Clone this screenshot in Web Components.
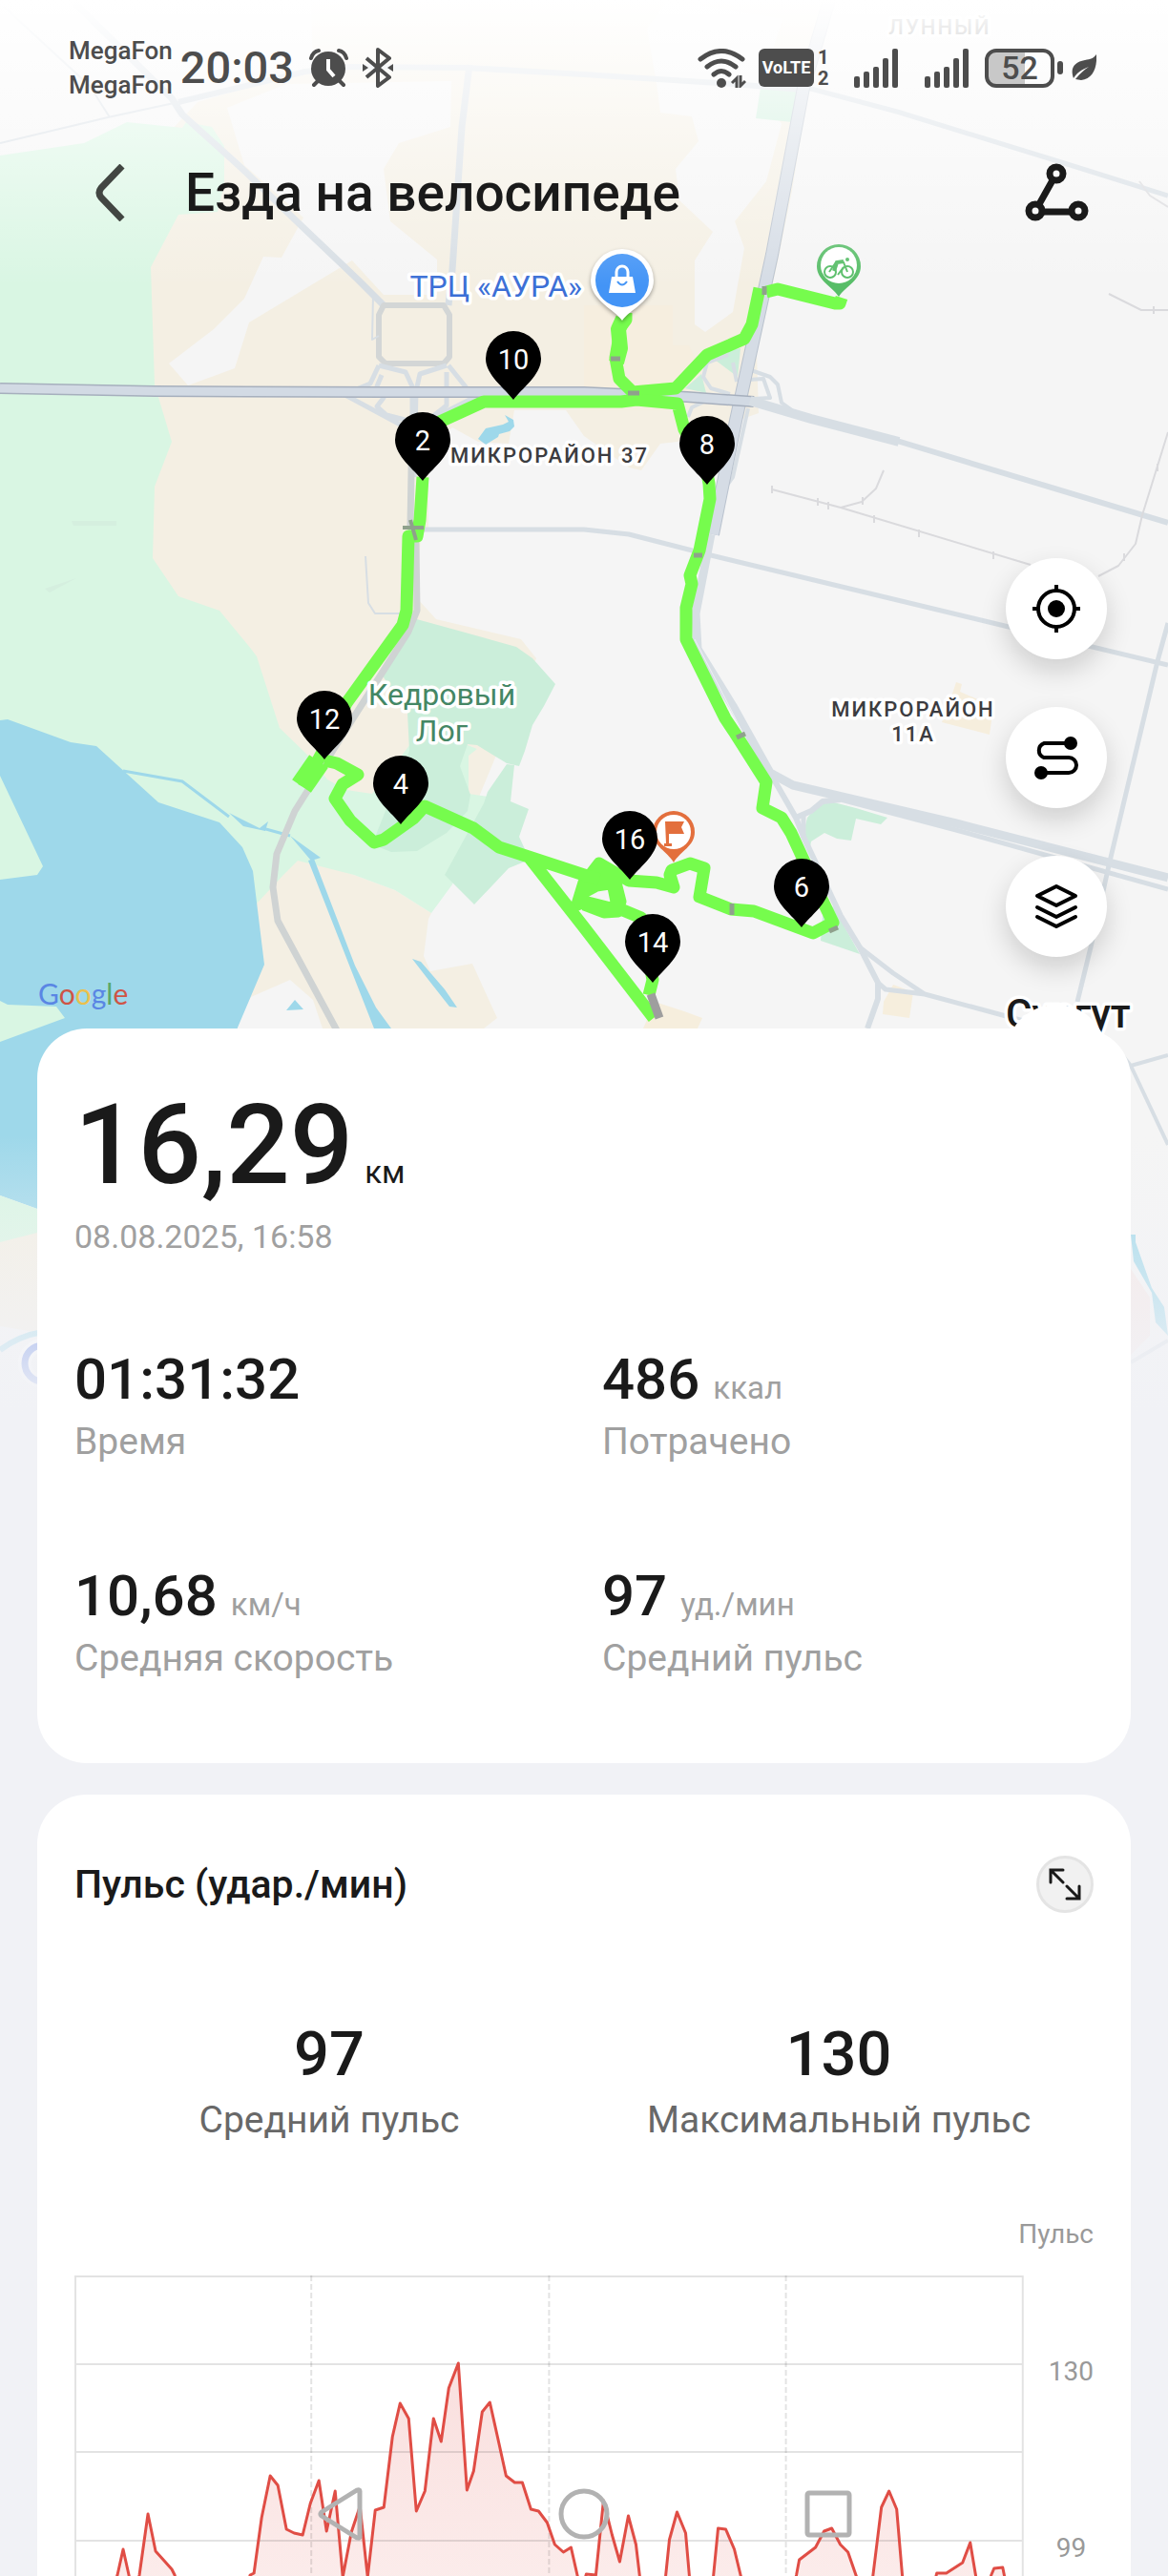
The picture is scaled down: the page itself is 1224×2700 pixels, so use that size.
<!DOCTYPE html>
<html lang="ru">
<head>
<meta charset="utf-8">
<meta name="viewport" content="width=device-width, initial-scale=1">
<title>Езда на велосипеде</title>
<style>
  :root{
    --bg:#f1f2f6;
    --surface:#fff;
    --text:#1a1a1a;
    --muted:#a0a0a0;
    --label:#686868;
    --status:#4d4d4d;
    --pulse:#e04d45;
  }
  html,body{ margin:0; background:var(--bg); }
  body{ font-family:Roboto,"Noto Sans",sans-serif; color:var(--text); }
</style>
</head>
<body>
<workout-screen>
  <route-map slot="map"></route-map>
  <status-bar></status-bar>
  <app-header heading="Езда на велосипеде"></app-header>
  <map-tools></map-tools>

  <fv-card>
    <workout-total value="16,29" unit="км" date="08.08.2025, 16:58"></workout-total>
    <stat-grid>
      <stat-item value="01:31:32" label="Время"></stat-item>
      <stat-item value="486" unit="ккал" label="Потрачено"></stat-item>
      <stat-item value="10,68" unit="км/ч" label="Средняя скорость"></stat-item>
      <stat-item value="97" unit="уд./мин" label="Средний пульс"></stat-item>
    </stat-grid>
  </fv-card>

  <fv-card open-end>
    <card-title>Пульс (удар./мин)</card-title>
    <stat-grid centered>
      <stat-item big value="97" label="Средний пульс"></stat-item>
      <stat-item big value="130" label="Максимальный пульс"></stat-item>
    </stat-grid>
    <pulse-chart></pulse-chart>
  </fv-card>
</workout-screen>
<nav-bar></nav-bar>

<script>
(function () {
  // small helper: register an element whose shadow root comes from one function
  function define(name, render){
    if (customElements.get(name)) return;
    customElements.define(name, class extends HTMLElement {
      connectedCallback(){
        if (this.shadowRoot) return;
        this.attachShadow({ mode: 'open' }).innerHTML = render(this);
      }
    });
  }
  const attr = (el, n) => el.getAttribute(n) || '';

  /* ---------- screen ---------- */
  define('workout-screen', () => `
    <style>
      :host{ display:grid; grid-template-columns:minmax(0,1fr); }
      ::slotted([slot="map"]), main{ grid-area:1 / 1; }
      main{ position:relative; min-width:0; }
    </style>
    <slot name="map"></slot>
    <main><slot></slot></main>`);

  /* ---------- status bar ---------- */
  const signal = `
    <svg width="47" height="41" viewBox="0 0 47 41" fill="currentColor" aria-hidden="true">
      <rect x="0" y="29" width="6" height="12" rx="2"/><rect x="10" y="24" width="6" height="17" rx="2"/>
      <rect x="20" y="19" width="6" height="22" rx="2"/><rect x="30" y="10" width="6" height="31" rx="2"/>
      <rect x="40" y="0" width="6" height="41" rx="2"/>
    </svg>`;

  define('status-bar', () => `
    <style>
      :host{
        display:flex; align-items:center; justify-content:space-between;
        height:142px; padding:0 75px 0 72px; box-sizing:border-box;
        color:var(--status); font-weight:500;
      }
      svg{ display:block; flex:none; }
      .side{ display:flex; align-items:center; }
      .carriers{ font-size:26px; line-height:36px; margin-right:8px; }
      .time{ font-size:47px; line-height:48px; margin-right:16px; }
      .alarm{ margin-right:15px; }
      .volte{
        width:58px; height:40px; margin:0 4px 0 13px; border-radius:6px;
        display:grid; place-items:center; background:var(--status); color:#fff;
        font-size:18px; line-height:24px; font-weight:700;
      }
      .sims{ font-size:20px; line-height:22px; font-weight:700; width:11px; margin-right:27px; }
      .gap{ width:27px; }
      .battery{
        width:73px; height:41px; box-sizing:border-box; border:4px solid; border-radius:12px;
        margin-left:16px; display:grid; place-items:center; font-size:34px; line-height:32px;
        background:linear-gradient(90deg,#c8c8c8 58%,transparent 58%);
      }
      .nub{ width:6px; height:14px; border-radius:3px; background:currentColor; margin:0 9px 0 3px; }
    </style>
    <div class="side">
      <div class="carriers"><div>MegaFon</div><div>MegaFon</div></div>
      <div class="time">20:03</div>
      <svg class="alarm" width="41" height="42" viewBox="0 0 41 42" aria-hidden="true">
        <g fill="none" stroke="currentColor" stroke-width="4" stroke-linecap="round">
          <path d="M2 11Q4 4 10 3M39 11Q37 4 31 3M5 39l6-6M36 39l-6-6"/></g>
        <circle cx="20" cy="22" r="18" fill="currentColor"/>
        <path d="M20 12v11l6 7" fill="none" stroke="#fff" stroke-width="4"/>
      </svg>
      <svg width="32" height="42" viewBox="0 0 32 42" fill="none" stroke="currentColor" stroke-width="4" stroke-linejoin="round" aria-hidden="true">
        <path d="M4 11l24 20-12 9V2l12 9L4 31"/><path d="M0 17l6 4-6 4zM32 17l-6 4 6 4z" fill="currentColor" stroke="none"/>
      </svg>
    </div>
    <div class="side">
      <svg width="51" height="41" viewBox="0 0 51 41" aria-hidden="true">
        <g fill="none" stroke="currentColor" stroke-width="5" stroke-linecap="round">
          <path d="M3 11Q25-6 47 11"/><path d="M10 19Q25 7 40 19"/><path d="M17 27Q25 20 33 27"/></g>
        <circle cx="25" cy="36" r="5" fill="currentColor"/>
        <path d="M36 36l5-5v10M45 28v11l5-5" fill="none" stroke="currentColor" stroke-width="3"/>
      </svg>
      <div class="volte">VoLTE</div>
      <div class="sims"><div>1</div><div>2</div></div>
      ${signal}<div class="gap"></div>${signal}
      <div class="battery">52</div><div class="nub"></div>
      <svg width="26" height="28" viewBox="0 0 26 28" aria-hidden="true">
        <path d="M26 0C27 14 22 26 10 27l-6-1C9 20 13 16 18 13 10 16 5 20 2 25-2 14 3 8 14 6 20 5 23 4 26 0z" fill="currentColor"/>
      </svg>
    </div>`);

  /* ---------- header ---------- */
  define('app-header', el => `
    <style>
      :host{ display:flex; align-items:center; height:120px; padding:0 73px 0 72px; box-sizing:border-box; }
      h1{ flex:1; margin:0 0 0 34px; font-size:55px; line-height:64px; font-weight:500; }
      button{ width:88px; height:88px; padding:0; border:0; background:none; display:grid; place-items:center; color:var(--text); }
      .back{ color:#424642; }
    </style>
    <button class="back" type="button" aria-label="Назад">
      <svg width="34" height="60" viewBox="0 0 34 60" fill="none" stroke="currentColor" stroke-width="7" stroke-linejoin="round">
        <path d="M29 2L7 25q-4 5 0 10l22 23"/></svg>
    </button>
    <h1>${attr(el,'heading')}</h1>
    <button type="button" aria-label="Маршрут">
      <svg width="68" height="62" viewBox="0 0 68 62" fill="none" stroke="currentColor" stroke-width="7">
        <circle cx="34" cy="11" r="7"/><circle cx="12" cy="50" r="7"/><circle cx="57" cy="50" r="7"/>
        <path d="M30 18L16 43M20 51h29"/></svg>
    </button>`);

  /* ---------- round buttons over the map ---------- */
  define('map-tools', () => `
    <style>
      :host{
        display:flex; flex-direction:column; align-items:flex-end; gap:50px;
        height:816px; padding:323px 64px 0; box-sizing:border-box;
      }
      button{
        flex:none; width:106px; height:106px; padding:0; border:0; border-radius:50%;
        display:grid; place-items:center; background:#fff; color:#000;
        box-shadow:0 12px 28px rgba(0,0,0,.16);
      }
      button.flat{ box-shadow:none; }
      svg{ fill:none; stroke:currentColor; stroke-width:4; }
    </style>
    <button type="button" aria-label="Моё местоположение">
      <svg width="50" height="50" viewBox="0 0 50 50"><circle cx="25" cy="25" r="19"/>
        <circle cx="25" cy="25" r="9" fill="currentColor" stroke="none"/><path d="M25 0v7M25 43v7M0 25h7M43 25h7"/></svg>
    </button>
    <button type="button" aria-label="Трек">
      <svg width="46" height="46" viewBox="0 0 46 46"><path d="M38 8H10a8 8 0 0 0 0 15h26a8 8 0 0 1 0 16H8"/>
        <circle cx="38" cy="8" r="7" fill="currentColor" stroke="none"/><circle cx="7" cy="39" r="7" fill="currentColor" stroke="none"/></svg>
    </button>
    <button type="button" aria-label="Слои карты">
      <svg width="46" height="48" viewBox="0 0 46 48" stroke-linejoin="round" stroke-linecap="round"><path d="M23 3l20 10-20 10L3 13z"/>
        <path d="M3 25l20 10 20-10M3 35l20 10 20-10"/></svg>
    </button>
    <button class="flat" type="button" aria-label="Ещё"></button>`);

  /* ---------- cards ---------- */
  define('fv-card', () => `
    <style>
      :host{
        display:block; position:relative; margin:0 39px 33px; padding:62px 39px 86px;
        background:var(--surface); border-radius:52px;
      }
      :host([open-end]){ margin-bottom:0; padding-bottom:0; border-radius:52px 52px 0 0; }
    </style>
    <slot></slot>`);

  define('workout-total', el => `
    <style>
      :host{ display:block; margin-bottom:98px; }
      .value{ font-size:117px; line-height:120px; font-weight:500; white-space:nowrap; }
      .unit{ font-size:33px; line-height:40px; font-weight:400; margin-left:12px; }
      time{ display:block; margin-top:16px; font-size:34px; line-height:40px; color:var(--muted); }
    </style>
    <div class="value">${attr(el,'value')}<span class="unit">${attr(el,'unit')}</span></div>
    <time>${attr(el,'date')}</time>`);

  define('stat-grid', () => `
    <style>
      :host{ display:grid; grid-template-columns:1fr 1fr; gap:106px 38px; }
      :host([centered]){ column-gap:0; margin-top:110px; text-align:center; }
    </style>
    <slot></slot>`);

  define('stat-item', el => `
    <style>
      :host{ display:block; }
      .value{ font-size:60px; line-height:64px; font-weight:500; }
      .unit{ font-size:33px; line-height:40px; font-weight:400; color:var(--muted); margin-left:14px; }
      .label{ margin-top:9px; font-size:39px; line-height:48px; color:var(--muted); }
      :host([big]) .value{ font-size:65px; line-height:72px; }
      :host([big]) .label{ color:var(--label); }
    </style>
    <div class="value">${attr(el,'value')}${attr(el,'unit') ? `<span class="unit">${attr(el,'unit')}</span>` : ''}</div>
    <div class="label">${attr(el,'label')}</div>`);

  define('card-title', () => `
    <style>
      :host{ display:flex; align-items:center; justify-content:space-between; }
      h2{ margin:0; font-size:41px; line-height:64px; font-weight:500; }
      button{
        width:60px; height:60px; box-sizing:border-box; padding:0; border:3px solid #e4e4e4; border-radius:50%;
        background:#f1f1f1; color:var(--text); display:grid; place-items:center;
      }
    </style>
    <h2><slot></slot></h2>
    <button type="button" aria-label="Развернуть">
      <svg width="34" height="34" viewBox="0 0 34 34" fill="none" stroke="currentColor" stroke-width="3" stroke-linecap="round">
        <path d="M2 15V2h13M2 2l13 13M32 19v13H19M32 32L19 19"/></svg>
    </button>`);

  /* ---------- pulse chart ---------- */
  const series = [
    '36,340 45,314 51,287 57,314 62,340 68,314 77,250 85,289 94,299 102,308 105,314 112,340',
    '176,340 184,314 188,312 196,254 205,210 213,220 222,266 230,270 239,272 247,239 256,215 264,268 273,226 281,316',
    '290,269 299,242 307,316 315,246 324,243 333,169 341,134 350,150 358,247 367,226 376,150 384,174 392,118 402,92',
    '411,225 418,205 427,143 435,133 443,169 452,210 461,217 469,217 478,245 486,247 495,259 503,282 512,290 520,285',
    '527,316 531,330 536,313 546,314 554,236 563,272 571,300 580,252 588,282 592,316 600,340 612,340 619,316 623,277',
    '631,248 640,270 644,316 650,340 662,340 669,316 674,265 682,266 691,287 698,316 706,340 750,340 756,314 759,298',
    '776,285 785,268 793,265 802,282 810,290 819,316 826,340 832,340 836,316 845,243 853,226 861,245 867,316 872,340',
    '896,340 903,312 913,312 930,301 938,280 944,316 948,340 954,340 960,314 963,307 972,306 974,316 978,340'
  ].join(' ');

  define('pulse-chart', () => `
    <style>
      :host{ display:block; margin-top:80px; color:#999; font-size:28px; line-height:32px; }
      .name{ text-align:right; }
      .plot{ display:flex; margin-top:27px; height:315px; overflow:hidden; }
      svg{ flex:1; min-width:0; height:315px; display:block; }
      .scale{ display:flex; flex-direction:column; align-items:center; gap:153px; padding-top:85px; margin-left:26px; }
    </style>
    <div class="name">Пульс</div>
    <div class="plot">
      <svg viewBox="0 0 994 315" preserveAspectRatio="none" role="img" aria-label="График пульса">
        <defs><linearGradient id="area" x1="0" y1="90" x2="0" y2="315" gradientUnits="userSpaceOnUse">
          <stop offset="0" stop-color="#e04d45" stop-opacity=".18"/><stop offset="1" stop-color="#e04d45" stop-opacity=".11"/>
        </linearGradient></defs>
        <polygon points="${series}" fill="url(#area)"/>
        <g stroke="#000" stroke-opacity=".11" stroke-width="2" fill="none">
          <path d="M1 315V1H993V315M0 93H994M0 185H994M0 278H994"/>
          <path d="M248 0V315M497 0V315M745 0V315" stroke-dasharray="6 3"/></g>
        <polyline points="${series}" fill="none" stroke="#e04d45" stroke-width="3" stroke-linejoin="round"/>
      </svg>
      <div class="scale"><span>130</span><span>99</span></div>
    </div>`);

  /* ---------- system navigation ---------- */
  define('nav-bar', () => `
    <style>
      :host{ position:fixed; left:0; right:0; bottom:0; height:130px; display:flex; align-items:center; justify-content:center; gap:199px; }
      button{ width:56px; height:56px; padding:0; border:0; background:none; display:grid; place-items:center; }
      svg{ fill:none; stroke:#b2b2b2; stroke-width:5; stroke-linejoin:round; }
    </style>
    <button type="button" aria-label="Назад"><svg width="56" height="56" viewBox="0 0 56 56"><path d="M48 4v48q0 2-3 1L8 30q-2-2 0-4L45 3q3-1 3 1z"/></svg></button>
    <button type="button" aria-label="Домой"><svg width="56" height="56" viewBox="0 0 56 56"><circle cx="28" cy="28" r="24"/></svg></button>
    <button type="button" aria-label="Недавние"><svg width="56" height="56" viewBox="0 0 56 56"><rect x="7" y="6" width="44" height="44" rx="2"/></svg></button>`);

  /* ---------- map ---------- */
  // kilometre pin, x/y is the tip
  const pin = (x, y, n) => `
    <g transform="translate(${x} ${y})">
      <path d="M0 0C-9-12-29-26-29-43A29 29 0 0 1 29-43C29-26 9-12 0 0z"/>
      <text y="-32" fill="#fff" font-size="29" text-anchor="middle">${n}</text>
    </g>`;
  const road = (w, d, c) => `<path d="${d}" stroke="${c || '#d7dee4'}" stroke-width="${w}"/>`;

  define('route-map', () => `
    <style>
      :host{ display:block; height:1480px; align-self:start; overflow:hidden; }
      svg{ display:block; width:100%; height:1480px; }
      .halo{ paint-order:stroke; stroke:#fff; stroke-width:7px; stroke-linejoin:round; }
      .area{ font-size:22px; font-weight:500; letter-spacing:2px; fill:#3c3c40; }
    </style>
    <svg viewBox="0 0 1224 1480" preserveAspectRatio="xMidYMin slice" role="img" aria-label="Карта маршрута">
      <defs>
        <linearGradient id="top" x1="0" y1="0" x2="0" y2="1"><stop offset="0" stop-color="#fff"/><stop offset="1" stop-color="#fff" stop-opacity="0"/></linearGradient>
        <linearGradient id="bottom" x1="0" y1="0" x2="0" y2="1"><stop offset="0" stop-color="#f1f2f6" stop-opacity="0"/><stop offset="1" stop-color="#f1f2f6"/></linearGradient>
      </defs>
      <rect width="1224" height="1480" fill="#f5f5f5"/>

      <!-- built-up land -->
      <g fill="#f4efe3">
        <path d="M207 107L328 72 326 0H865L846 100 830 200 813 283 793 370 795 433 710 463 692 465 672 493 659 490 612 457 593 430H539L533 465 501 463 474 448 449 470V553L441 560 437 627 457 649 546 670 562 690 500 840 300 900 120 800 120 200z"/>
        <path d="M312 895L371 917 414 933 452 957 449 963 444 1002 451 1018 495 1010 521 1067 507 1078H338L328 1048 304 1027 263 1045 240 1090 240 930z"/>
        <path d="M0 1290L60 1270V1400L0 1390z"/>
      </g>
      <g fill="#f5f5f5">
        <path d="M238 113L300 88 473 85 472 133 418 150 402 177 409 232 458 272V309H402L369 273 261 338 246 386 197 404 177 381 224 345 256 313 276 269 295 270 318 228 256 173z"/>
        <path d="M678 30L688 87 692 118 725 122 732 148 708 177 712 210 747 243 728 273V340L739 348 768 327 780 260 770 232 803 190 819 130 797 92 820 20 700 0z"/>
      </g>
      <path fill="#f6eedf" d="M612 320H705V362H722L735 390 700 430H612z"/>
      <g fill="#f6eedd">
        <path d="M1002 715L1008 717 1006 725 1041 740 1037 770 987 757 998 727zM936 1032L957 1040 953 1067 925 1063 926 1050zM686 1050L717 1060 736 1067 731 1078H674z"/>
      </g>

      <!-- forest and parks -->
      <path fill="#d9f6e3" d="M0 163L88 150 133 128 191 134 195 128 222 133 235 153V193L228 222 187 225 158 280 162 403 180 463 162 510 160 585 187 625 230 640 263 680 269 688 293 763 324 793 343 817 363 828 390 832 430 780 490 781 500 785 491 792V832L511 835 500 870 474 927 452 957 414 933 371 917 312 902 297 917 269 947 240 1090H0z"/>
      <path fill="#d5efdf" d="M75 546H122V551H77zM47 617L80 606 52 621z"/>
      <g fill="#cbeeda">
        <path d="M433 648L484 662 541 678 558 690 582 717 570 740 558 760 550 787 544 803 531 800 500 781 490 780 482 803 493 833 490 850 468 873 437 892 410 893 390 885 429 787 427 747 400 707z"/>
        <path d="M539 802L535 840 554 848 544 877 550 890V903L533 910 497 948 466 917 507 842 511 830 531 801z"/>
        <path d="M862 838L897 847 930 857 923 864 897 858 892 881 877 879 864 873 850 882 848 893 842 873 846 857zM873 950L901 1000 860 986 862 960zM741 371L776 365 773 395zM718 407L735 392 740 412z"/>
        <path d="M797 92L836 93 830 128 792 124z"/>
      </g>

      <!-- water -->
      <g fill="#9ed8ea">
        <path d="M0 755L8 754 74 778 101 782 166 841 230 862 254 888 265 913 277 1011 249 1077 200 1280H60L39 1267 0 1253z"/>
        <path d="M323 902L329 900 372 1012 394 1056 410 1078H392zM432 1005L441 1008 466 1037 479 1056 471 1055 449 1027zM300 1059L309 1048 318 1058zM304 876L336 899 326 902zM240 852L272 868 281 861 278 871 255 866z"/>
        <path d="M501 460L509 449 527 445 533 442 529 435 538 440 539 447 534 452 523 455 522 458 509 466z"/>
        <path d="M1185 1294H1190V1302L1207 1350 1220 1370 1224 1400 1211 1386 1207 1355 1188 1322z"/>
      </g>
      <path d="M129 808L191 819 240 856M275 868L304 876" fill="none" stroke="#9ed8ea" stroke-width="3"/>
      <path d="M0 1415Q20 1400 45 1396" fill="none" stroke="#9ed8ea" stroke-width="6"/>
      <path fill="#d9f6e3" d="M0 813L45 908 39 917 0 922zM0 1049L8 1053 59 1055 68 1067 0 1092zM0 1253L39 1267V1292L0 1302z"/>
      <path fill="#f6e8e6" d="M1185 1330L1205 1360V1400L1185 1420z"/>

      <!-- roads -->
      <g fill="none" stroke-linejoin="round">
        ${road(2,'M4 7L94 90 115 123M0 150L113 123 187 107')}
        ${road(6,'M187 107L320 75 367 70 488 71 612 78 768 88 840 94')}
        ${road(7,'M78 3L180 103 191 120 254 177 312 233 375 293 402 320')}
        ${road(7,'M492 68L484 133 474 283 470 320')}
        ${road(5,'M846 92L940 117 1112 170 1224 205')}
        ${road(6,'M402 320H465L471 330V374L465 381H404L397 374V330z','#d3d6d6')}
        ${road(2,'M391 310L390 356 397 352M383 583L386 632 393 643H420')}
        ${road(5,'M397 383L388 402 362 413M397 383L425 390 432 405V440M400 393L395 405 402 417 395 426 405 435 432 442M468 383L440 392 436 410 434 500M470 383L490 408M468 390V425L440 447M358 412L425 448 470 430 500 415')}
        ${road(7,'M432 440L430 550 436 570 437 640 428 662 375 745 309 850 290 895 286 930 291 965 353 1080','#cfd3d3')}
        ${road(4,'M763 372L741 380 737 395 745 407 765 413M768 380L772 400M721 437L725 427 740 420H770M784 387L807 395 815 403 819 422 830 430M784 398L800 397 807 417 790 418M784 428L768 500 754 520')}
        ${road(5,'M441 555H612L659 560 745 582 1057 657 1224 697')}
        ${road(5,'M1224 653L1213 693 1162 907 1143 993 1129 1050')}
        ${road(4,'M1177 1107L1185 1117 1224 1106M1185 1117L1224 1200M1185 1428L1224 1405')}
        ${road(6,'M807 810L834 857 842 877 881 960 901 993 920 1030V1047L909 1078M834 857L850 850 862 840 881 838')}
        ${road(5,'M842 877V853M901 993L936 1020 969 1042M920 1030L928 1037 969 1042 1080 1072')}
        ${road(9,'M745 560L729 643 731 680 768 740 807 810 831 823 1002 863 1224 920')}
        ${road(5,'M881 838L1002 870 1224 932')}
        ${road(14,'M869 0L842 92 809 267 771 441 747 560','#b9c2ce')}
        ${road(12,'M869 0L842 92 809 267 771 441 747 560','#d5dce5')}
        ${road(12,'M0 407L162 410 400 411H612L720 416 790 421','#a6afbd')}
        ${road(9,'M0 407L162 410 400 411H612L720 416 790 421','#d2dae4')}
        ${road(10,'M786 420L850 439 942 463')}
        ${road(6,'M940 462L1224 548')}
        ${road(1,'M728 670L800 810','#eef1f3')}
        <g stroke="#dadadd" stroke-width="2">
          <path d="M809 513L881 532 1080 592M926 493L918 512 903 526 881 532M1224 453L1197 540 1190 570 1172 593 1151 604M1162 308L1196 325H1224M1194 190L1205 205 1224 217"/>
          <path d="M809 509v8M857 522v8M868 526v8M916 540v8M963 555v8M1041 578v8M1178 580v8M1213 486v8M904 521v8M1209 321v8"/>
        </g>
      </g>

      <!-- ridden track -->
      <g fill="none" stroke="#76fc4d" stroke-width="13" stroke-linejoin="round">
        <path d="M882 312L880 318 875 318 815 303 803 306M796 302L788 340 780 355 741 372 708 407 663 411 649 397 645 375 648 358 650 343 656 335V328"/>
        <path d="M653 334L648 345 650 365 646 380" stroke-width="16"/>
        <path d="M449 456L461 442 507 421H651L667 419 710 423 717 450 740 490 743 507 744 523 733 577 723 603 725 612 719 637V670L760 753 770 768 803 820 799 847 819 857 829 873 860 940 873 967 852 978 790 955 766 953 733 940 738 910 723 905 704 912 702 917 706 930 688 925 659 923 628 905 618 918 612 935 625 928 645 925 650 945 640 952 612 945 605 948 612 925 640 915 648 955 633 956 612 948M648 952L672 962 684 1027 680 1043"/>
        <path d="M443 500L440 545 437 562 428 562 426 640 422 655 363 737 345 775 318 825"/>
        <path d="M340 797L353 800 375 812 359 822 351 837 367 860 392 883 402 880 433 858 445 845 496 868 523 888 554 898 612 917 628 922M554 898L612 972 685 1067"/>
        <path d="M334 798L316 824" stroke-width="24"/>
      </g>
      <g stroke="#8fa18c" fill="none">
        <path d="M422 553L444 553M430 545L436 566" stroke-width="4"/>
        <path d="M640 376h10M658 412h12M801 300v9M727 582h9M772 773l9-4M767 947v12M869 976l9-4" stroke-width="5"/>
        <path d="M682 1042L691 1067" stroke="#9e9e9e" stroke-width="9"/>
      </g>

      <!-- labels -->
      <text class="halo" x="610" y="311" text-anchor="end" font-size="32" fill="#3b6fd6">ТРЦ «АУРА»</text>
      <text class="halo area" x="472" y="485">МИКРОРАЙОН 37</text>
      <g class="halo area" text-anchor="middle"><text x="957" y="751">МИКРОРАЙОН</text><text x="957" y="777">11А</text>
        <text x="985" y="36">ЛУННЫЙ</text></g>
      <g class="halo" text-anchor="middle" font-size="32" fill="#448765"><text x="463" y="739">Кедровый</text><text x="463" y="777">Лог</text></g>
      <text class="halo" x="1054" y="1077" font-size="42" font-weight="500" fill="#1a1a1a">Сургут</text>
      <text x="40" y="1053" font-family="Lato,sans-serif" font-size="30"><tspan fill="#5a86e4">G</tspan><tspan fill="#cf5445">o</tspan><tspan fill="#ecc04c">o</tspan><tspan fill="#5a86e4">g</tspan><tspan fill="#58a867">l</tspan><tspan fill="#cf5445">e</tspan></text>
      <circle cx="45" cy="1429" r="19" fill="none" stroke="#fff" stroke-width="14"/>
      <circle cx="45" cy="1429" r="19" fill="none" stroke="#4b73e4" stroke-width="7"/>

      <!-- places -->
      <path d="M652 336C645 325 619 315 619 294A33 33 0 0 1 685 294C685 315 659 325 652 336z" fill="#fff" style="filter:drop-shadow(0 2px 2px rgba(0,0,0,.35))"/>
      <circle cx="652" cy="294" r="28" fill="#4394f6"/>
      <path d="M641 290H663L666 307H638z" fill="#fff"/><path d="M646 292V285A6 6 0 0 1 658 285V292" fill="none" stroke="#fff" stroke-width="3"/>
      <path d="M647 295Q652 302 657 295" fill="none" stroke="#4394f6" stroke-width="2"/>

      <path d="M879 311C872 300 856 294 856 279A23 23 0 0 1 902 279C902 294 886 300 879 311z" fill="#57bd67"/>
      <circle cx="879" cy="278" r="19" fill="#fff"/>
      <g fill="none" stroke="#57bd67" stroke-width="2"><circle cx="870" cy="285" r="6"/><circle cx="888" cy="285" r="6"/>
        <path d="M869 285L876 275H884L888 285M878 288L884 280"/><path d="M874 284L877 275 884 274" stroke-width="4"/></g>
      <circle cx="888" cy="272" r="2" fill="#57bd67"/>

      <path d="M706 904C699 892 684 887 684 872A22 22 0 0 1 728 872C728 887 713 892 706 904z" fill="#e36f3d"/>
      <circle cx="706" cy="872" r="18" fill="#fff"/>
      <path d="M697 861H717L714 867 717 874H701V884H704V887H696V884H698z" fill="#e36f3d"/>

      ${pin(538,419,10)}${pin(443,504,2)}${pin(741,508,8)}${pin(340,796,12)}
      ${pin(420,864,4)}${pin(660,922,16)}${pin(684,1030,14)}${pin(840,972,6)}

      <rect width="1224" height="300" fill="url(#top)"/>
      <rect y="1190" width="1224" height="290" fill="url(#bottom)"/>
    </svg>`);
})();
</script>
</body>
</html>
